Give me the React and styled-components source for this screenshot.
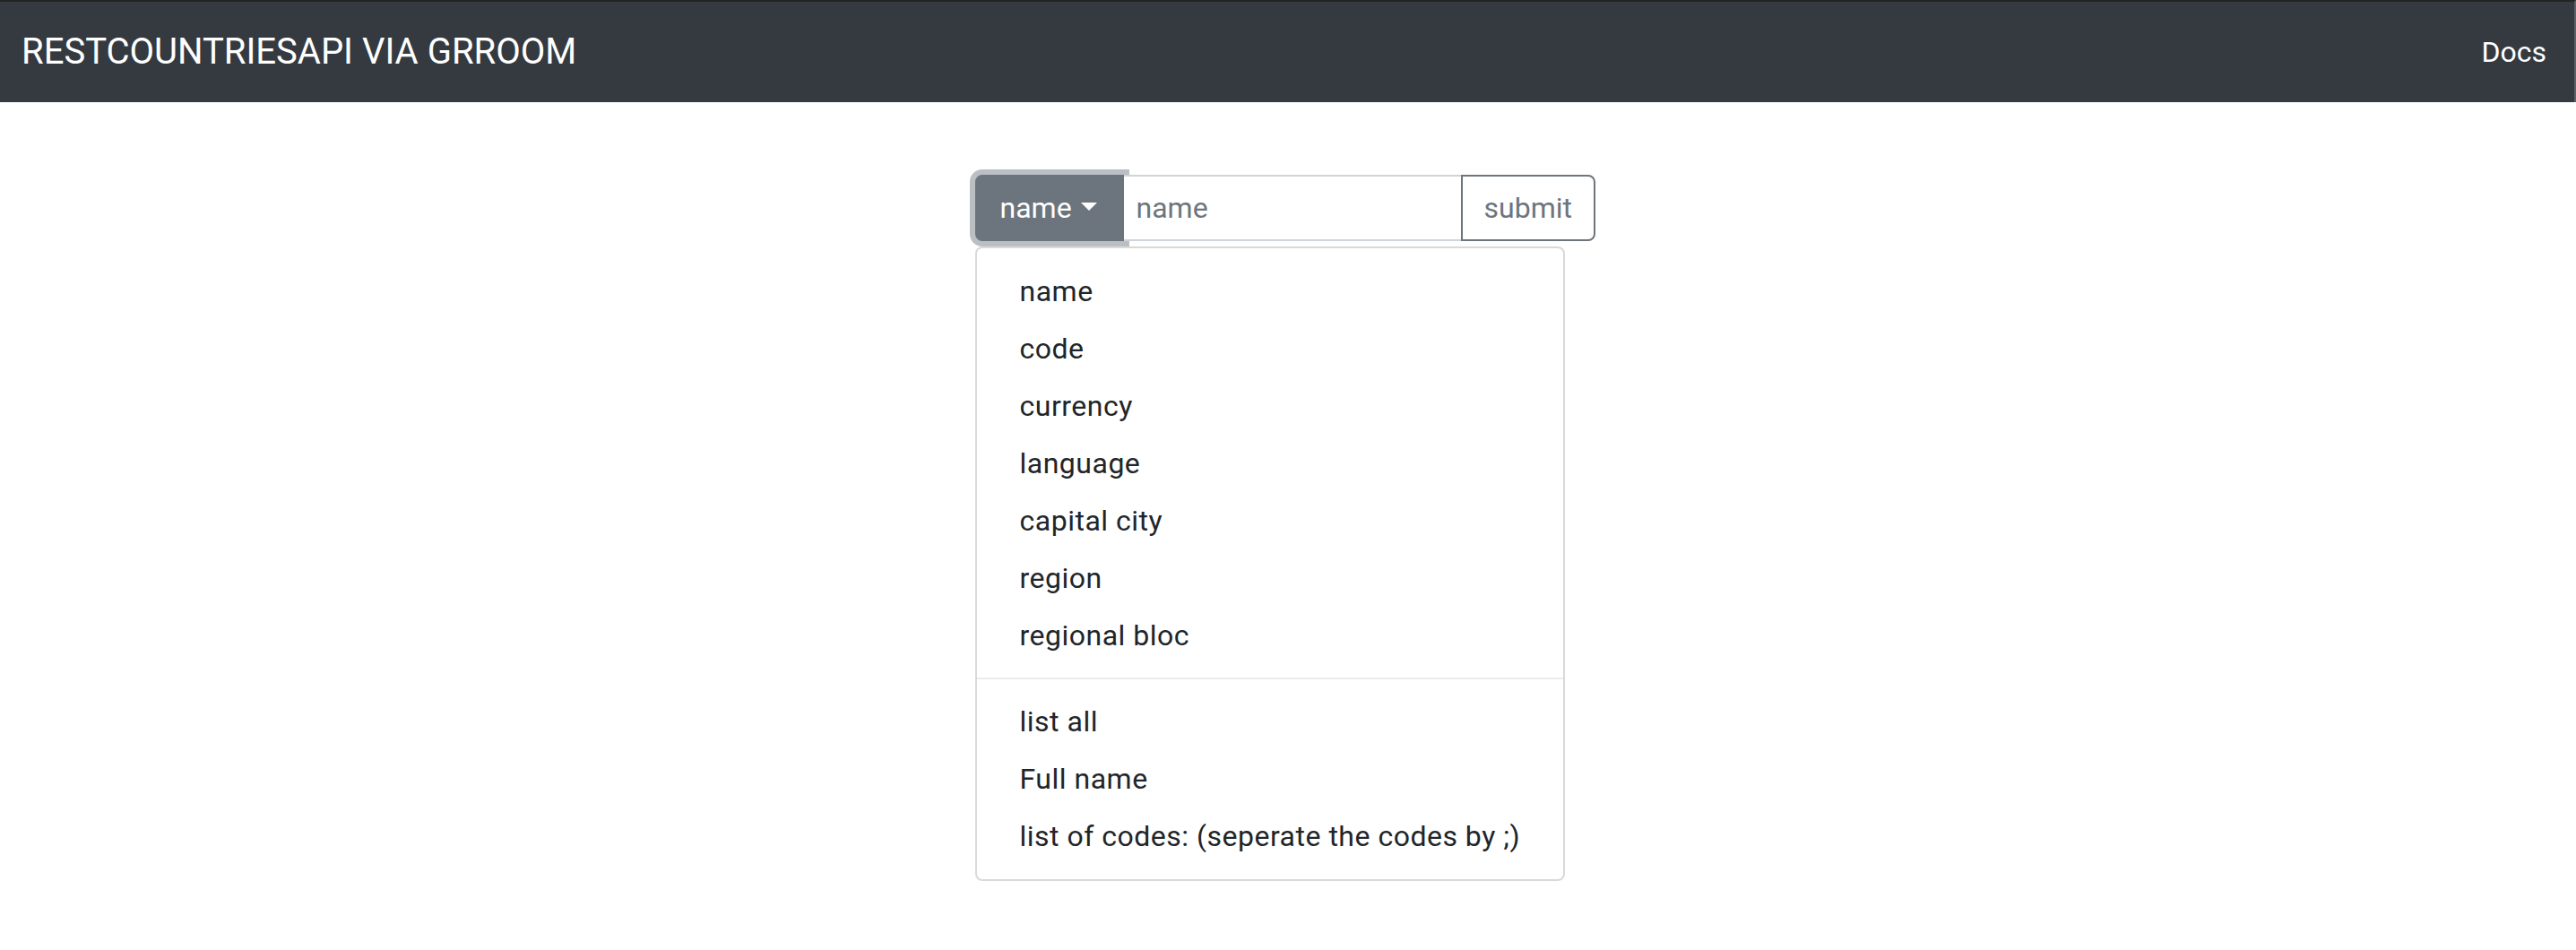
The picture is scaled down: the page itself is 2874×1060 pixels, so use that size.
import React, { useState } from 'react'
import styled, { createGlobalStyle } from 'styled-components'

const GlobalStyle = createGlobalStyle`
  body {
    margin: 0;
    background: #fff;
    font-family: Roboto, "Liberation Sans", Arial, sans-serif;
    color: #212529;
  }
  * { box-sizing: border-box; }
`

const options = ['name', 'code', 'currency', 'language', 'capital city', 'region', 'regional bloc']
const extras = ['list all', 'Full name', 'list of codes: (seperate the codes by ;)']

function App() {
  const [mode, setMode] = useState('name')

  return (
    <>
      <GlobalStyle />
      <Navbar>
        <Brand href="#">RESTCOUNTRIESAPI VIA GRROOM</Brand>
        <NavLink href="#">Docs</NavLink>
      </Navbar>
      <Main>
        <Search>
          <InputGroup>
            <ToggleButton>
              {mode}
              <Caret />
            </ToggleButton>
            <SearchInput placeholder="name" />
            <SubmitButton>submit</SubmitButton>
          </InputGroup>
          <Dropdown>
            {options.map(o => (
              <MenuItem key={o} onClick={() => setMode(o)}>{o}</MenuItem>
            ))}
            <Divider />
            {extras.map(o => (
              <MenuItem key={o}>{o}</MenuItem>
            ))}
          </Dropdown>
        </Search>
      </Main>
    </>
  )
}

export default App

const Navbar = styled.nav`
  display: flex;
  align-items: center;
  justify-content: space-between;
  background-color: #343a40;
  border-top: 2px solid #232323;
  border-right: 2px solid #5c6166;
  padding: 16px 31px 16px 24px;
  height: 114px;
`

const Brand = styled.a`
  color: #fff;
  font-size: 40px;
  line-height: 60px;
  padding: 10px 0;
  text-decoration: none;
  white-space: nowrap;
`

const NavLink = styled.a`
  color: #fff;
  font-size: 32px;
  line-height: 48px;
  padding: 16px 0;
  text-decoration: none;
`

const Main = styled.main`
  display: flex;
  justify-content: center;
  padding: 81px 7px 0 0;
`

const Search = styled.div`
  display: flex;
  flex-direction: column;
  align-items: flex-start;
`

const InputGroup = styled.div`
  display: flex;
  height: 74px;
`

const ToggleButton = styled.button`
  position: relative;
  z-index: 0;
  display: flex;
  align-items: center;
  width: 166px;
  padding: 0 0 0 26px;
  font-family: inherit;
  font-size: 32px;
  color: #fff;
  background-color: #6c757d;
  border: 2px solid #6c757d;
  border-radius: 8px 0 0 8px;
  box-shadow: 0 0 0 6px rgba(130, 138, 145, 0.55);
`

const Caret = styled.span`
  display: inline-block;
  margin-left: 10px;
  margin-top: -4px;
  border-top: 9px solid #fff;
  border-left: 9px solid transparent;
  border-right: 9px solid transparent;
`

const SearchInput = styled.input`
  position: relative;
  z-index: 1;
  width: 376px;
  padding: 0 16px 0 14px;
  font-family: inherit;
  font-size: 32px;
  color: #495057;
  background: #fff;
  border: 2px solid #ced4da;
  border-left: none;
  border-right: none;
  outline: none;
  &::placeholder {
    color: #6c757d;
  }
`

const SubmitButton = styled.button`
  width: 150px;
  font-family: inherit;
  font-size: 32px;
  color: #6c757d;
  background: #fff;
  border: 2px solid #6c757d;
  border-radius: 0 8px 8px 0;
  padding: 0 24px;
`

const Dropdown = styled.div`
  display: flex;
  flex-direction: column;
  margin-top: 6px;
  padding: 16px 0;
  background: #fff;
  border: 2px solid rgba(0, 0, 0, 0.15);
  border-radius: 8px;
`

const MenuItem = styled.a`
  display: block;
  padding: 8px 48px;
  font-size: 32px;
  line-height: 48px;
  letter-spacing: 0.5px;
  color: #212529;
  white-space: nowrap;
  text-decoration: none;
  cursor: pointer;
`

const Divider = styled.div`
  height: 0;
  margin: 15px 0;
  border-top: 2px solid #e9ecef;
`
